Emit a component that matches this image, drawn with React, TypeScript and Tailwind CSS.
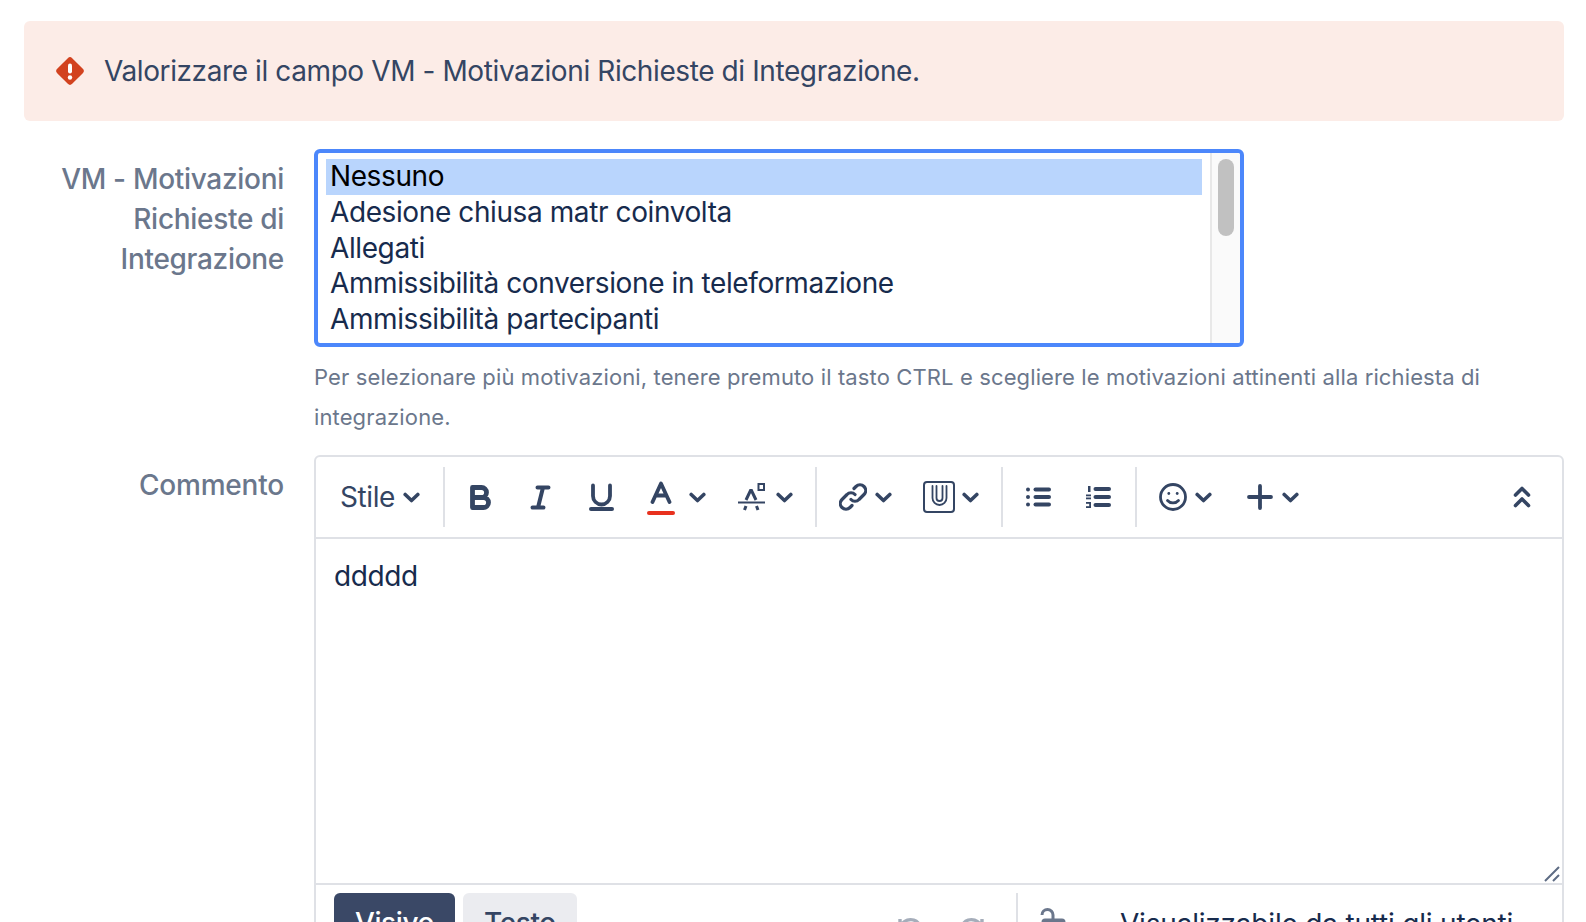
const options = [
  "Adesione chiusa matr coinvolta",
  "Allegati",
  "Ammissibilità conversione in teleformazione",
  "Ammissibilità partecipanti",
];

function Chevron({ className }: { className: string }) {
  return (
    <svg viewBox="0 0 17 11" className={`w-[17px] h-[11px] shrink-0 ${className}`} fill="none" stroke="#344563" strokeWidth="3.6" strokeLinecap="round" strokeLinejoin="round">
      <path d="M2.200 2.500l6.300 6 6.300-6" />
    </svg>
  );
}

function Separator({ className }: { className: string }) {
  return <div className={`w-[2px] h-[60px] bg-[#dfe1e6] shrink-0 ${className}`} />;
}

function Toolbar() {
  return (
    <div className="h-[82px] flex items-center border-b-2 border-[#dfe1e6] text-[#344563]">
      <span className="ml-[24px] w-[56px] text-[28px] leading-none tracking-[-0.4px]">Stile</span>
      <Chevron className="ml-[7px]" />
      <Separator className="ml-[23px]" />
      {/* B */}
      <svg viewBox="0 0 22 25" className="w-[22px] h-[25px] shrink-0 ml-[25px]" fill="none" stroke="#344563" strokeWidth="4.8" strokeLinejoin="round">
        <path d="M2.500 2.500h9a4.900 4.900 0 0 1 0 10H2.500zM2.500 12.500h11a5 5 0 0 1 0 10H2.500z" />
      </svg>
      {/* I */}
      <svg viewBox="0 0 21 25" className="w-[21px] h-[25px] shrink-0 ml-[38px]" fill="none" stroke="#344563" strokeWidth="4" strokeLinecap="round">
        <path d="M7.500 2.500h11M2.500 22.500h11M13 2.500L8 22.500" />
      </svg>
      {/* U */}
      <svg viewBox="0 0 25 28" className="w-[25px] h-[28px] shrink-0 ml-[38px]" fill="none" stroke="#344563" strokeWidth="3.8" strokeLinecap="round">
        <path d="M4 2.500v10.500a8.500 8.500 0 0 0 17 0V2.500" />
        <path d="M2 26h21" strokeWidth="4" />
      </svg>
      {/* A with colour */}
      <div className="ml-[33px] w-[28px] h-[36px] flex flex-col items-center justify-between shrink-0">
        <svg viewBox="0 0 22 23" className="w-[22px] h-[23px] mt-[2px]" fill="none" stroke="#344563" strokeWidth="3.800" strokeLinecap="round" strokeLinejoin="round">
          <path d="M2.500 21L11 2.500 19.500 21M6 14.500h10" />
        </svg>
        <div className="w-[28px] h-[4px] rounded-full bg-[#e8311e]" />
      </div>
      <Chevron className="ml-[14px]" />
      {/* testo effetti */}
      <svg viewBox="0 0 29 28" className="w-[29px] h-[28px] shrink-0 ml-[31px]" fill="none" stroke="#344563" strokeWidth="3" strokeLinejoin="miter">
        <path d="M1 19.500h27" strokeWidth="2" />
        <path d="M9 17l4.500-9.500h1L19 17M7.500 27l1.500-4M21 27l-1.500-4" />
        <path d="M21.500 1h5.500v6h-5.500z" strokeWidth="2" />
      </svg>
      <Chevron className="ml-[10px]" />
      <Separator className="ml-[22px]" />
      {/* link */}
      <svg viewBox="0 0 28 28" className="w-[28px] h-[28px] shrink-0 ml-[22px]" fill="none" stroke="#344563" strokeWidth="3.2" strokeLinecap="round" strokeLinejoin="round">
        <path d="M12 16.500a5.500 5.500 0 0 0 8 0l5-5a5.600 5.600 0 0 0-8-8l-2 2" />
        <path d="M16 11.500a5.500 5.500 0 0 0-8 0l-5 5a5.600 5.600 0 0 0 8 8l2-2" />
      </svg>
      <Chevron className="ml-[8px]" />
      {/* allegato */}
      <svg viewBox="0 0 32 32" className="w-[32px] h-[32px] shrink-0 ml-[31px]" fill="none" stroke="#344563" strokeLinecap="round" strokeLinejoin="round">
        <rect x="1" y="1" width="30" height="30" rx="3" strokeWidth="2" />
        <path d="M9.500 5v12a7 7 0 0 0 14 0V5" strokeWidth="1.800" />
        <path d="M13.500 5v12a3 3 0 0 0 6 0V5" strokeWidth="1.800" />
      </svg>
      <Chevron className="ml-[7px]" />
      <Separator className="ml-[22px]" />
      {/* elenco puntato */}
      <svg viewBox="0 0 25 20" className="w-[25px] h-[20px] shrink-0 ml-[23px]" fill="#344563">
        <circle cx="2" cy="2.500" r="2" />
        <circle cx="2" cy="10" r="2" />
        <circle cx="2" cy="17.500" r="2" />
        <rect x="7.500" y="0.500" width="17.500" height="4" rx="2" />
        <rect x="7.500" y="8" width="17.500" height="4" rx="2" />
        <rect x="7.500" y="15.500" width="17.500" height="4" rx="2" />
      </svg>
      {/* elenco numerato */}
      <svg viewBox="0 0 25 22" className="w-[25px] h-[22px] shrink-0 ml-[35px]" fill="#344563">
        <rect x="2" y="0" width="2.500" height="6" />
        <rect x="0" y="8.500" width="5" height="1.800" />
        <rect x="0" y="11.500" width="5" height="1.800" />
        <rect x="0" y="16" width="5" height="1.800" />
        <rect x="3.200" y="16" width="1.800" height="6" />
        <rect x="0" y="20.200" width="5" height="1.800" />
        <rect x="7.500" y="1" width="17.500" height="4" rx="2" />
        <rect x="7.500" y="9" width="17.500" height="4" rx="2" />
        <rect x="7.500" y="17" width="17.500" height="4" rx="2" />
      </svg>
      <Separator className="ml-[24px]" />
      {/* faccina */}
      <svg viewBox="0 0 28 28" className="w-[28px] h-[28px] shrink-0 ml-[22px]" fill="none" stroke="#344563" strokeWidth="2.800" strokeLinecap="round">
        <circle cx="14" cy="14" r="12.500" />
        <path d="M8.500 17.500c2.800 3.200 8.200 3.200 11 0" />
        <circle cx="9.800" cy="10.500" r="1.400" fill="#344563" stroke="none" />
        <circle cx="18.200" cy="10.500" r="1.400" fill="#344563" stroke="none" />
      </svg>
      <Chevron className="ml-[8px]" />
      {/* piu */}
      <svg viewBox="0 0 26 26" className="w-[26px] h-[26px] shrink-0 ml-[35px]" fill="none" stroke="#344563" strokeWidth="3.800" strokeLinecap="round">
        <path d="M13 2v22M2 13h22" />
      </svg>
      <Chevron className="ml-[9px]" />
      <div className="flex-1" />
      {/* comprimi */}
      <svg viewBox="0 0 18 22" className="w-[18px] h-[22px] shrink-0 mr-[31px]" fill="none" stroke="#344563" strokeWidth="3.600" strokeLinecap="round" strokeLinejoin="round">
        <path d="M2.500 9L9 2.500 15.500 9M2.500 19.500L9 13l6.500 6.500" />
      </svg>
    </div>
  );
}

export default function App() {
  return (
    <div className="w-[1586px] h-[922px] overflow-hidden bg-white pl-6 pr-[22px] pt-[21px] font-['Inter',sans-serif] tracking-[-0.4px]">
      <div className="h-[100px] rounded-md bg-[#fcece7] flex items-center pl-8 text-[28px] text-[#344563]">
        <svg viewBox="0 0 28 28" className="w-[28px] h-[28px] shrink-0">
          <path d="M11.800 1.200a3.100 3.100 0 0 1 4.400 0l10.600 10.600a3.100 3.100 0 0 1 0 4.400L16.200 26.800a3.100 3.100 0 0 1-4.400 0L1.200 16.200a3.100 3.100 0 0 1 0-4.400z" fill="#d2421f" />
          <rect x="12" y="6.500" width="4" height="10" rx="2" fill="#fff" />
          <circle cx="14" cy="20.500" r="2.200" fill="#fff" />
        </svg>
        <span className="ml-[20px]">Valorizzare il campo VM - Motivazioni Richieste di Integrazione.</span>
      </div>

      <div className="mt-[28px] flex">
        <div className="w-[260px] shrink-0 pt-[10px] text-right text-[28px] leading-[40px] font-medium tracking-[-0.3px] text-[#6b778c]">
          VM - Motivazioni Richieste di Integrazione
        </div>
        <div className="ml-[30px] flex-1 min-w-0">
          <div className="w-[930px] h-[198px] border-4 border-[#4c87fb] rounded-[6px] flex overflow-hidden text-[28px] leading-[34px] text-[#172b4d]">
            <div className="flex-1 pl-2 pt-[6px] pr-2">
              <div className="h-[36px] bg-[#b9d5fd] pl-[4px] text-black">Nessuno</div>
              {options.map((o) => (
                <div key={o} className="h-[35.500px] pl-[4px]">{o}</div>
              ))}
            </div>
            <div className="w-[30px] border-l-2 border-[#e8e8e8] bg-[#fafafa] pl-[6px] pt-[6px] shrink-0">
              <div className="w-[16px] h-[77px] rounded-full bg-[#c1c1c1]" />
            </div>
          </div>
          <div className="mt-[10px] text-[22px] leading-[40px] tracking-[0.12px] text-[#6b778c]">
            Per selezionare più motivazioni, tenere premuto il tasto CTRL e scegliere le motivazioni attinenti alla richiesta di integrazione.
          </div>
        </div>
      </div>

      <div className="mt-[18px] flex">
        <div className="w-[260px] shrink-0 pt-[10px] text-right text-[28px] leading-[40px] font-medium tracking-[-0.2px] text-[#6b778c]">
          Commento
        </div>
        <div className="ml-[30px] flex-1 min-w-0 h-[600px] border-2 border-[#dfe1e6] rounded-[6px]">
          <Toolbar />
          <div className="relative h-[346px] border-b-2 border-[#dfe1e6] pl-[18px] pt-[17px] text-[28px] leading-[40px] text-[#172b4d]">
            ddddd
            <svg viewBox="0 0 16 16" className="absolute right-[2px] bottom-[1px] w-[16px] h-[16px]" fill="none" stroke="#5e6c84" strokeWidth="2">
              <path d="M1 15L15 1M9 15l6-6" />
            </svg>
          </div>
          <div className="flex items-start pt-2 text-[28px]">
            <div className="ml-[18px] w-[121px] h-[60px] rounded-[6px] bg-[#3a4866] text-white font-medium flex items-center justify-center">Visivo</div>
            <div className="ml-2 w-[114px] h-[60px] rounded-[6px] bg-[#ebecf0] text-[#344563] font-medium flex items-center justify-center">Testo</div>
            <svg viewBox="0 0 26 26" className="ml-[320px] mt-[24px] w-[26px] h-[26px] shrink-0" fill="none" stroke="#a5adba" strokeWidth="3.400">
              <path d="M3 6V2M3 13A10.500 10.500 0 0 1 22 7" />
            </svg>
            <svg viewBox="0 0 26 26" className="ml-[36px] mt-[24px] w-[26px] h-[26px] shrink-0" fill="none" stroke="#a5adba" strokeWidth="3.400">
              <path d="M23 6V2M23 13A10.500 10.500 0 0 0 4 7" />
            </svg>
            <div className="ml-[31px] w-[2px] h-[60px] bg-[#dfe1e6] shrink-0" />
            <svg viewBox="0 0 26 30" className="ml-[22px] mt-[14px] w-[26px] h-[30px] shrink-0" fill="none" stroke="#6b778c" strokeWidth="3">
              <path d="M2 8a5.500 5.500 0 0 1 11 0v6" />
              <rect x="3" y="13" width="21" height="15" rx="2" fill="#6b778c" />
            </svg>
            <span className="ml-[54px] mt-[11px] leading-[40px] tracking-[-0.2px] text-[#172b4d] whitespace-nowrap">Visualizzabile da tutti gli utenti</span>
          </div>
        </div>
      </div>
    </div>
  );
}
